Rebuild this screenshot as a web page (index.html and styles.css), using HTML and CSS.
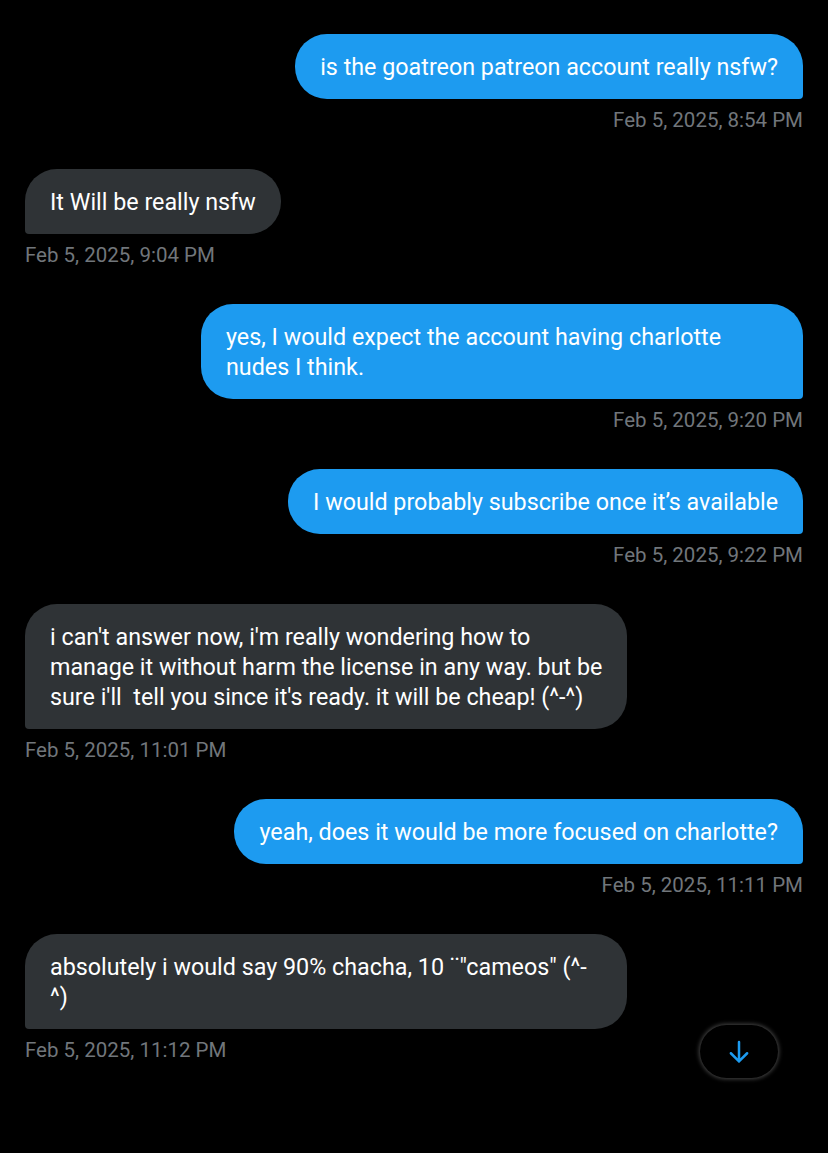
FILE: index.html
```html
<!DOCTYPE html>
<html>
<head>
<meta charset="utf-8">
<link rel="stylesheet" href="styles.css">
</head>
<body>
<div class="chat">
  <div class="msg out">
    <div class="bubble">is the goatreon patreon account really nsfw?</div>
    <div class="time">Feb 5, 2025, 8:54 PM</div>
  </div>
  <div class="msg in">
    <div class="bubble">It Will be really nsfw</div>
    <div class="time">Feb 5, 2025, 9:04 PM</div>
  </div>
  <div class="msg out">
    <div class="bubble full">yes, I would expect the account having charlotte<br>nudes I think.</div>
    <div class="time">Feb 5, 2025, 9:20 PM</div>
  </div>
  <div class="msg out">
    <div class="bubble">I would probably subscribe once it’s available</div>
    <div class="time">Feb 5, 2025, 9:22 PM</div>
  </div>
  <div class="msg in">
    <div class="bubble full">i can't answer now, i'm really wondering how to<br>manage it without harm the license in any way. but be<br>sure i'll&nbsp; tell you since it's ready. it will be cheap! (^-^)</div>
    <div class="time">Feb 5, 2025, 11:01 PM</div>
  </div>
  <div class="msg out">
    <div class="bubble">yeah, does it would be more focused on charlotte?</div>
    <div class="time">Feb 5, 2025, 11:11 PM</div>
  </div>
  <div class="msg in">
    <div class="bubble full">absolutely i would say 90% chacha, 10 ¨"cameos" (^-<br>^)</div>
    <div class="time">Feb 5, 2025, 11:12 PM</div>
  </div>
</div>
<button class="scroll-down" aria-label="Scroll down">
  <svg width="30" height="30" viewBox="0 0 24 24"><path d="M12 4v15.5M5.5 13L12 19.5 18.5 13" fill="none" stroke="#1d9bf0" stroke-width="2" stroke-linecap="round" stroke-linejoin="round"/></svg>
</button>
</body>
</html>
```

FILE: styles.css
```css
html, body {
  margin: 0;
  padding: 0;
  background: #000;
}
body {
  font-family: Roboto, "Noto Sans", "Liberation Sans", sans-serif;
  color: #e7e9ea;
  width: 828px;
  height: 1153px;
  position: relative;
  overflow: hidden;
}
.chat {
  display: flex;
  flex-direction: column;
  padding: 34px 25px 0 25px;
}
.msg {
  display: flex;
  flex-direction: column;
  margin-bottom: 36px;
}
.msg.out { align-items: flex-end; }
.msg.in { align-items: flex-start; }
.bubble {
  font-size: 23.3px;
  line-height: 30px;
  padding: 17.5px 25px;
  border-radius: 32px;
  white-space: nowrap;
  color: #fff;
}
.bubble.full {
  width: 553px;
  padding-left: 25px;
  padding-right: 24px;
}
.out .bubble {
  background: #1d9bf0;
  border-bottom-right-radius: 4px;
}
.in .bubble {
  background: #2f3336;
  border-bottom-left-radius: 4px;
}
.time {
  margin-top: 8px;
  font-size: 20.5px;
  line-height: 26px;
  color: #71767b;
}
.scroll-down {
  position: absolute;
  left: 700px;
  top: 1025px;
  width: 78px;
  height: 53px;
  border-radius: 27px;
  background: #000;
  border: none;
  box-shadow: 0 0 4px 1px rgba(255,255,255,0.28);
  display: flex;
  align-items: center;
  justify-content: center;
  padding: 0;
}
```
